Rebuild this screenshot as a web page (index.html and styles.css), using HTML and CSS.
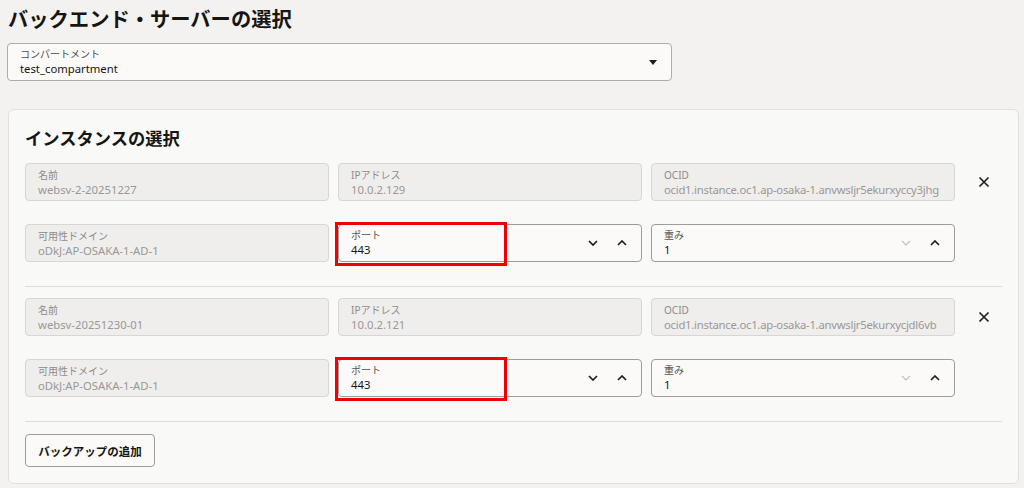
FILE: index.html
```html
<!DOCTYPE html>
<html lang="ja">
<head>
<meta charset="utf-8">
<title>バックエンド・サーバーの選択</title>
<link rel="stylesheet" href="styles.css">
</head>
<body>
<div class="page">
  <h1 class="title">バックエンド・サーバーの選択</h1>
  <div class="select">
    <div class="field-text">
      <div class="label">コンパートメント</div>
      <div class="value">test_compartment</div>
    </div>
    <span class="caret"></span>
  </div>

  <section class="card">
    <h2 class="card-title">インスタンスの選択</h2>

    <div class="block">
      <div class="row">
        <div class="field ro"><div class="label">名前</div><div class="value">websv-2-20251227</div></div>
        <div class="field ro"><div class="label">IPアドレス</div><div class="value">10.0.2.129</div></div>
        <div class="field ro"><div class="label">OCID</div><div class="value ocid">ocid1.instance.oc1.ap-osaka-1.anvwsljr5ekurxyccy3jhg</div></div>
        <button class="close" aria-label="削除"><svg viewBox="0 0 12 12" width="12" height="12"><path d="M1.5 1.5 L10.5 10.5 M10.5 1.5 L1.5 10.5" stroke="#1f1e1d" stroke-width="1.7" fill="none"/></svg></button>
      </div>
      <div class="row">
        <div class="field ro"><div class="label">可用性ドメイン</div><div class="value">oDkJ:AP-OSAKA-1-AD-1</div></div>
        <div class="field ed hl">
          <div class="field-text"><div class="label">ポート</div><div class="value">443</div></div>
          <span class="spin"><svg viewBox="0 0 10 6" width="10" height="6"><path d="M1 1 L5 5 L9 1" stroke="#1f1e1d" stroke-width="1.7" fill="none"/></svg></span>
          <span class="spin"><svg viewBox="0 0 10 6" width="10" height="6"><path d="M1 5 L5 1 L9 5" stroke="#1f1e1d" stroke-width="1.7" fill="none"/></svg></span>
          <span class="mark"></span>
        </div>
        <div class="field ed">
          <div class="field-text"><div class="label">重み</div><div class="value">1</div></div>
          <span class="spin"><svg viewBox="0 0 10 6" width="10" height="6"><path d="M1 1 L5 5 L9 1" stroke="#c4c2bf" stroke-width="1.2" fill="none"/></svg></span>
          <span class="spin"><svg viewBox="0 0 10 6" width="10" height="6"><path d="M1 5 L5 1 L9 5" stroke="#1f1e1d" stroke-width="1.7" fill="none"/></svg></span>
        </div>
      </div>
    </div>

    <div class="block">
      <div class="row">
        <div class="field ro"><div class="label">名前</div><div class="value">websv-20251230-01</div></div>
        <div class="field ro"><div class="label">IPアドレス</div><div class="value">10.0.2.121</div></div>
        <div class="field ro"><div class="label">OCID</div><div class="value ocid">ocid1.instance.oc1.ap-osaka-1.anvwsljr5ekurxycjdl6vb</div></div>
        <button class="close" aria-label="削除"><svg viewBox="0 0 12 12" width="12" height="12"><path d="M1.5 1.5 L10.5 10.5 M10.5 1.5 L1.5 10.5" stroke="#1f1e1d" stroke-width="1.7" fill="none"/></svg></button>
      </div>
      <div class="row">
        <div class="field ro"><div class="label">可用性ドメイン</div><div class="value">oDkJ:AP-OSAKA-1-AD-1</div></div>
        <div class="field ed hl">
          <div class="field-text"><div class="label">ポート</div><div class="value">443</div></div>
          <span class="spin"><svg viewBox="0 0 10 6" width="10" height="6"><path d="M1 1 L5 5 L9 1" stroke="#1f1e1d" stroke-width="1.7" fill="none"/></svg></span>
          <span class="spin"><svg viewBox="0 0 10 6" width="10" height="6"><path d="M1 5 L5 1 L9 5" stroke="#1f1e1d" stroke-width="1.7" fill="none"/></svg></span>
          <span class="mark"></span>
        </div>
        <div class="field ed">
          <div class="field-text"><div class="label">重み</div><div class="value">1</div></div>
          <span class="spin"><svg viewBox="0 0 10 6" width="10" height="6"><path d="M1 1 L5 5 L9 1" stroke="#c4c2bf" stroke-width="1.2" fill="none"/></svg></span>
          <span class="spin"><svg viewBox="0 0 10 6" width="10" height="6"><path d="M1 5 L5 1 L9 5" stroke="#1f1e1d" stroke-width="1.7" fill="none"/></svg></span>
        </div>
      </div>
    </div>

    <button class="btn">バックアップの追加</button>
  </section>
</div>
</body>
</html>
```

FILE: styles.css
```css
* { box-sizing: border-box; }
html, body { margin: 0; padding: 0; }
body {
  background: #f3f2f0;
  font-family: "Noto Sans", "Noto Sans CJK JP", sans-serif;
  color: #161513;
  width: 1024px;
  height: 488px;
  overflow: hidden;
}
.page { padding: 4px 6px 0 7px; }
.title {
  margin: 0 0 0 1px;
  font-size: 20.3px;
  line-height: 30px;
  font-weight: 700;
  color: #161513;
}
.select {
  margin-top: 9px;
  width: 665px;
  height: 38px;
  background: #fbfaf8;
  border: 1px solid #aeacaa;
  border-radius: 4px;
  display: flex;
  align-items: center;
  padding: 0 14px 0 12px;
}
.select .field-text { flex: 1; }
.select .label { color: #4f4d4b; }
.select .value { color: #161513; }
.caret {
  width: 0; height: 0;
  border-left: 4px solid transparent;
  border-right: 4px solid transparent;
  border-top: 5px solid #1f1e1d;
}
.label {
  font-size: 10px;
  line-height: 13px;
  white-space: nowrap;
}
.value {
  font-size: 11.3px;
  line-height: 16px;
  white-space: nowrap;
  overflow: hidden;
}
.value.ocid { letter-spacing: -0.25px; }
.card {
  margin: 28px 0 0 1px;
  width: 1011px;
  height: 375px;
  background: #f9f9f7;
  border: 1px solid #e2e0dd;
  border-radius: 6px;
  padding: 16px 16px 0 16px;
}
.card-title {
  margin: 0 0 12px 0;
  font-size: 17.3px;
  line-height: 25px;
  font-weight: 700;
}
.block {
  display: flex;
  flex-direction: column;
  gap: 23px;
  padding-bottom: 24px;
  border-bottom: 1px solid #dfddda;
}
.block + .block { padding-top: 11px; }
.row {
  display: grid;
  grid-template-columns: 304px 304px 304px 46px;
  column-gap: 9px;
  align-items: center;
}
.field {
  height: 38px;
  border-radius: 4px;
  padding: 5px 12px 0 12px;
  position: relative;
  overflow: visible;
}
.field.ro {
  background: #efeeec;
  border: 1px solid #d8d6d3;
}
.field.ro .label { color: #8d8b89; }
.field.ro .value { color: #9a9896; }
.field.ed {
  background: #fbfaf9;
  border: 1px solid #9e9c99;
  display: flex;
  align-items: center;
  padding: 0 14px 0 12px;
  gap: 19px;
}
.field.ed .field-text { flex: 1; }
.field.ed .label { color: #56524f; }
.field.ed .value { color: #161513; }
.spin {
  width: 10px;
  display: flex;
  align-items: center;
  justify-content: center;
}
.mark {
  position: absolute;
  left: -4px;
  top: -3px;
  width: 172px;
  height: 44px;
  border: 3px solid #f20000;
  pointer-events: none;
}
.close {
  justify-self: start;
  margin-left: 10px;
  width: 20px;
  height: 20px;
  padding: 0;
  border: 0;
  background: transparent;
  display: flex;
  align-items: center;
  justify-content: center;
}
.btn {
  margin-top: 12px;
  height: 33px;
  width: 130px;
  padding: 0;
  background: #fbfaf9;
  border: 1px solid #9e9c99;
  border-radius: 4px;
  font-family: "Noto Sans", "Noto Sans CJK JP", sans-serif;
  font-size: 11.5px;
  font-weight: 700;
  color: #161513;
}
```
